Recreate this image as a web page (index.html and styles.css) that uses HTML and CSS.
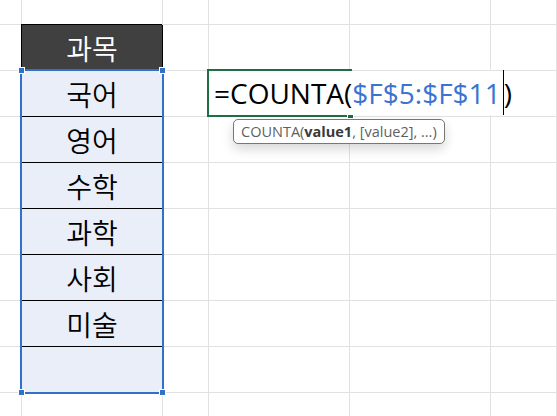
FILE: index.html
```html
<!DOCTYPE html>
<html lang="ko">
<head>
<meta charset="utf-8">
<title>COUNTA</title>
<link rel="stylesheet" href="styles.css">
</head>
<body>
<div class="sheet">
  <div class="grid">
    <!-- row 1 -->
    <div class="c"></div><div class="c"></div><div class="c"></div><div class="c"></div><div class="c"></div><div class="c"></div>
    <!-- row 2 -->
    <div class="c"></div><div class="c head">과목</div><div class="c"></div><div class="c"></div><div class="c"></div><div class="c"></div>
    <!-- row 3 -->
    <div class="c"></div><div class="c data">국어</div><div class="c"></div><div class="c"></div><div class="c"></div><div class="c"></div>
    <!-- row 4 -->
    <div class="c"></div><div class="c data">영어</div><div class="c"></div><div class="c"></div><div class="c"></div><div class="c"></div>
    <!-- row 5 -->
    <div class="c"></div><div class="c data">수학</div><div class="c"></div><div class="c"></div><div class="c"></div><div class="c"></div>
    <!-- row 6 -->
    <div class="c"></div><div class="c data">과학</div><div class="c"></div><div class="c"></div><div class="c"></div><div class="c"></div>
    <!-- row 7 -->
    <div class="c"></div><div class="c data">사회</div><div class="c"></div><div class="c"></div><div class="c"></div><div class="c"></div>
    <!-- row 8 -->
    <div class="c"></div><div class="c data">미술</div><div class="c"></div><div class="c"></div><div class="c"></div><div class="c"></div>
    <!-- row 9 -->
    <div class="c"></div><div class="c data last"></div><div class="c"></div><div class="c"></div><div class="c"></div><div class="c"></div>
    <!-- row 10 -->
    <div class="c"></div><div class="c"></div><div class="c"></div><div class="c"></div><div class="c"></div><div class="c"></div>
  </div>

  <div class="range">
    <span class="h tl"></span><span class="h tr"></span><span class="h bl"></span><span class="h br"></span>
  </div>

  <div class="active"><span class="fill"></span></div>

  <div class="editor"><span class="plain">=COUNTA(</span><span class="ref">$F$5:$F$11</span><span class="caret"></span><span class="plain">)</span></div>

  <div class="tip"><span class="fn">COUNTA(</span><b class="arg">value1</b><span class="fn">, [value2], ...)</span></div>
</div>
</body>
</html>
```

FILE: styles.css
```css
html, body {
  margin: 0;
  padding: 0;
  background: #fff;
  overflow: hidden;
}

.sheet {
  position: relative;
  width: 557px;
  height: 416px;
  overflow: hidden;
}

.grid {
  display: grid;
  grid-template-columns: 22px 141px 46px 141px 141px 66px;
  grid-template-rows: 25px repeat(9, 46px);
}

.c {
  box-sizing: border-box;
  border-right: 1px solid #e1e1e1;
  border-bottom: 1px solid #e1e1e1;
  display: flex;
  align-items: center;
  justify-content: center;
  font-family: "Noto Sans CJK KR", "Noto Sans", sans-serif;
  font-size: 28px;
  font-weight: 350;
  color: #000;
}

.head {
  background: #404040;
  color: #fff;
  border-right-color: #000;
  border-bottom-color: #000;
  box-shadow: -1px -1px 0 0 #000;
}

.data {
  background: #e9eef8;
  border-bottom-color: #000;
  padding-top: 1px;
}

.range {
  position: absolute;
  left: 20px;
  top: 69px;
  width: 144px;
  height: 325px;
  box-sizing: border-box;
  border: 2px solid #3370c8;
}

.h {
  position: absolute;
  width: 5px;
  height: 5px;
  background: #3370c8;
  border: 1px solid #fff;
}
.tl { left: -4px; top: -4px; }
.tr { right: -4px; top: -4px; }
.bl { left: -4px; bottom: -4px; }
.br { right: -4px; bottom: -4px; }

.active {
  position: absolute;
  left: 207px;
  top: 69px;
  width: 145px;
  height: 48px;
  box-sizing: border-box;
  border: 2px solid #1f6e43;
}

.fill {
  position: absolute;
  right: -4px;
  bottom: -4px;
  width: 5px;
  height: 5px;
  background: #1f6e43;
  border: 1px solid #fff;
}

.editor {
  position: absolute;
  left: 209px;
  top: 71px;
  width: 306px;
  height: 44px;
  background: #fff;
  box-sizing: border-box;
  padding-left: 5px;
  display: flex;
  align-items: center;
  font-family: "Open Sans", "Noto Sans", sans-serif;
  font-size: 28px;
  color: #000;
  white-space: nowrap;
}

.ref {
  color: #3b73cf;
}

.caret {
  display: inline-block;
  width: 1px;
  height: 45px;
  background: #000;
  margin: -1px 0 0 2px;
  align-self: flex-start;
}

.tip {
  position: absolute;
  left: 233px;
  top: 119px;
  width: 212px;
  height: 25px;
  box-sizing: border-box;
  border: 1px solid #777;
  border-radius: 5px;
  background: #fff;
  box-shadow: 0 5px 12px rgba(0, 0, 0, 0.16);
  padding-left: 7px;
  font-family: "Open Sans", "Noto Sans", sans-serif;
  font-size: 14.5px;
  line-height: 23px;
  white-space: nowrap;
}

.fn {
  color: #5f5f5f;
}

.arg {
  color: #3a3a3a;
  font-weight: 700;
}
```
